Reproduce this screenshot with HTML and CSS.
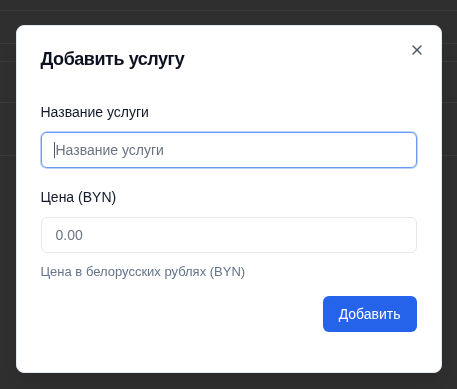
FILE: index.html
```html
<!DOCTYPE html>
<html lang="ru">
<head>
<meta charset="utf-8">
<title>Добавить услугу</title>
<link rel="stylesheet" href="styles.css">
</head>
<body>
<div class="app">
  <div class="row r1"></div>
  <div class="row r2"></div>
  <div class="row r3"></div>
  <div class="row r4"></div>
  <div class="row r5"></div>
</div>
<div class="overlay">
  <div class="dialog" role="dialog">
    <h2 class="title">Добавить услугу</h2>
    <button class="close" aria-label="Закрыть">
      <svg viewBox="0 0 24 24" width="16" height="16" fill="none" stroke="currentColor" stroke-width="2" stroke-linecap="round" stroke-linejoin="round"><path d="M18 6 6 18"/><path d="m6 6 12 12"/></svg>
    </button>
    <form class="form">
      <div class="field">
        <label class="label" for="name">Название услуги</label>
        <div class="input-wrap">
          <input class="input input-focus" id="name" type="text" placeholder="Название услуги">
          <span class="caret"></span>
        </div>
      </div>
      <div class="field">
        <label class="label" for="price">Цена (BYN)</label>
        <input class="input" id="price" type="text" placeholder="0.00">
        <p class="hint">Цена в белорусских рублях (BYN)</p>
      </div>
      <div class="footer">
        <button type="button" class="btn">Добавить</button>
      </div>
    </form>
  </div>
</div>
</body>
</html>
```

FILE: styles.css
```css
* { box-sizing: border-box; }
html, body { margin: 0; padding: 0; height: 100%; }
body {
  background: #2f2f2f;
  font-family: "Liberation Sans", Arial, sans-serif;
  overflow: hidden;
}
.app { display: flex; flex-direction: column; }
.row { border-bottom: 1px solid #3a3a3a; }
.r1 { height: 11px; }
.r2 { height: 33px; }
.r3 { height: 18px; }
.r4 { height: 41px; }
.r5 { height: 53px; }

.overlay {
  position: fixed;
  inset: 0;
  display: flex;
  align-items: center;
  justify-content: center;
  padding-top: 8px;
}
.dialog {
  position: relative;
  width: 426px;
  background: #ffffff;
  border: 1px solid #e2e8f0;
  border-radius: 8px;
  padding: 24px 24px 40px;
  box-shadow: 0 10px 15px -3px rgba(0,0,0,0.1), 0 4px 6px -4px rgba(0,0,0,0.1);
}
.title {
  margin: 0;
  font-size: 18px;
  line-height: 18px;
  font-weight: 700;
  letter-spacing: -0.025em;
  color: #0b1120;
}
.close {
  position: absolute;
  top: 16px;
  right: 16px;
  width: 16px;
  height: 16px;
  padding: 0;
  border: 0;
  background: none;
  color: #4b5563;
  display: flex;
}
.form {
  margin-top: 34px;
  display: flex;
  flex-direction: column;
  gap: 19px;
}
.field { display: flex; flex-direction: column; }
.label {
  font-size: 14px;
  line-height: 20px;
  color: #111827;
  margin-bottom: 10px;
}
.input-wrap { position: relative; }
.input {
  display: block;
  height: 36px;
  width: 100%;
  border: 1px solid #e5e7eb;
  border-radius: 6px;
  padding: 0 14px;
  font-family: inherit;
  font-size: 14px;
  color: #111827;
  background: #fff;
  outline: none;
}
.input::placeholder { color: #6b7280; }
.input-focus {
  border-color: #6b9bf2;
  box-shadow: 0 0 0 1px rgba(107,155,242,0.45);
}
.caret {
  position: absolute;
  left: 13px;
  top: 10px;
  width: 1px;
  height: 16px;
  background: #4b5563;
}
.hint {
  margin: 9px 0 0;
  font-size: 13px;
  line-height: 20px;
  color: #64748b;
}
.footer {
  display: flex;
  justify-content: flex-end;
  margin-top: -5px;
}
.btn {
  height: 36px;
  padding: 0 16px;
  border: 0;
  border-radius: 6px;
  background: #2563eb;
  color: #fff;
  font-family: inherit;
  font-size: 14px;
  font-weight: 400;
}
```
